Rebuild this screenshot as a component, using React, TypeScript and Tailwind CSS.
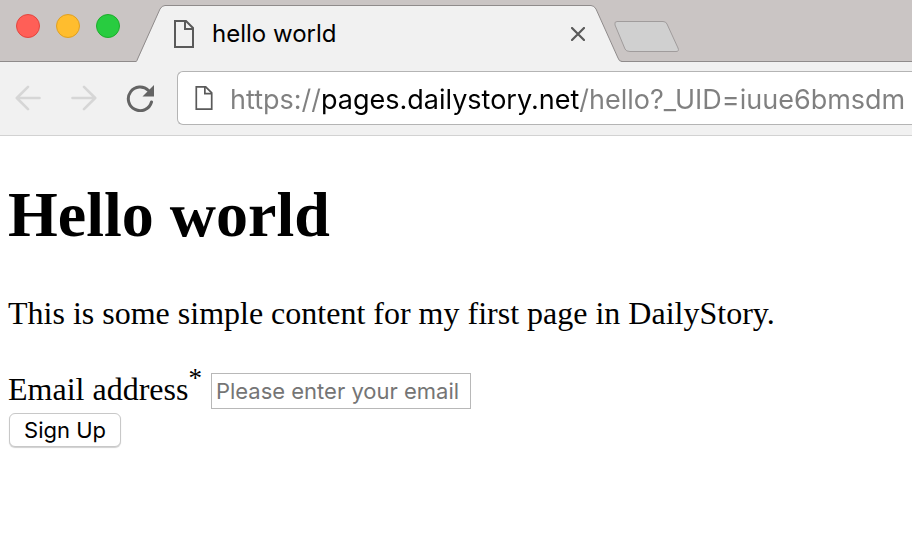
import { useState } from "react";

function PageIcon({ className }: { className: string }) {
  return (
    <svg viewBox="0 0 20 28" fill="none" stroke="#5a5a5a" strokeWidth="2" className={className} aria-hidden="true">
      <path d="M1 1H12L19 8V27H1Z" />
      <path d="M11 1V9H19" />
    </svg>
  );
}

function ArrowIcon({ className }: { className: string }) {
  return (
    <svg viewBox="0 0 26 26" fill="none" stroke="#d6d6d6" strokeWidth="2.600" strokeLinecap="round" strokeLinejoin="round" className={className} aria-hidden="true">
      <path d="M24.500 13H2M13 1.800L1.800 13L13 24.200" />
    </svg>
  );
}

function TabStrip() {
  return (
    <header className="flex h-[62px] items-start bg-[#cac5c4] shadow-[inset_0_-1px_0_#8f8b8b]">
      <div className="flex w-[136px] shrink-0 gap-4 pt-[14px] pl-4">
        <button aria-label="Close window" className="size-6 rounded-full border border-[#e2463f] bg-[#ff5f57]" />
        <button aria-label="Minimize window" className="size-6 rounded-full border border-[#dfa023] bg-[#ffbd2e]" />
        <button aria-label="Zoom window" className="size-6 rounded-full border border-[#1dad2b] bg-[#28cc40]" />
      </div>
      <div className="relative h-[62px] w-[486px] shrink-0">
        <svg viewBox="0 0 486 62" className="absolute inset-0 size-full" aria-hidden="true">
          <path d="M0 62L1 61L24 9Q26 5.500 29 5.500H455Q458 5.500 460 9L483 60L486 62Z" fill="#f1f1f1" />
          <path d="M0 61.500Q1 61 2 58L24 9Q26 5.500 29 5.500H455Q458 5.500 460 9L482 58Q483 61.500 486 61.500" fill="none" stroke="#8f8b8b" />
        </svg>
        <div className="relative flex h-full items-center pt-[6px] pr-9 pl-[38px]">
          <PageIcon className="h-7 w-5" />
          <span className="ml-[18px] flex-1 text-[24px] leading-8 text-black">hello world</span>
          <button aria-label="Close tab" className="p-[1px]">
            <svg viewBox="0 0 14 14" stroke="#5a5a5a" strokeWidth="2.200" strokeLinecap="round" className="size-[14px]" aria-hidden="true">
              <path d="M1 1L13 13M13 1L1 13" />
            </svg>
          </button>
        </div>
      </div>
      <button aria-label="New tab" className="-ml-2 pt-[21px]">
        <svg viewBox="0 0 66 32" className="h-8 w-[66px]" fill="#d0d0d0" stroke="#a09c9c" aria-hidden="true">
          <path d="M3 0.500H49Q52 0.500 53 3L64 27Q65.500 30.500 62 30.500H16Q12 30.500 11 28L1 4Q0 0.500 3 0.500Z" />
        </svg>
      </button>
    </header>
  );
}

function Toolbar() {
  const [url, setUrl] = useState("https://pages.dailystory.net/hello?_UID=iuue6bmsdm");
  return (
    <nav className="flex h-[74px] items-center overflow-hidden border-b border-[#d2d2d2] bg-[#f1f1f1] pb-[2px] pl-[15px]">
      <button aria-label="Back" disabled className="mr-[30px] shrink-0">
        <ArrowIcon className="size-[26px]" />
      </button>
      <button aria-label="Forward" disabled className="mr-[29px] shrink-0">
        <ArrowIcon className="size-[26px] rotate-180" />
      </button>
      <button aria-label="Reload" className="mr-[23px] shrink-0">
        <svg viewBox="0 0 28 28" className="size-7" fill="none" aria-hidden="true">
          <path d="M22.500 6.500A11.800 11.800 0 1 0 25.500 18" stroke="#646464" strokeWidth="3" strokeLinecap="round" />
          <path d="M28 1V12.500H16.500Z" fill="#646464" />
        </svg>
      </button>
      <div className="flex h-[54px] min-w-0 flex-1 items-center rounded-l-md border border-r-0 border-[#b4b4b4] bg-white pl-[17px]">
        <PageIcon className="h-6 w-[18px] shrink-0" />
        <input
          type="text"
          aria-label="Address"
          value={url}
          onChange={(e) => setUrl(e.target.value)}
          spellCheck={false}
          className="ml-[17px] h-12 min-w-0 flex-1 bg-[linear-gradient(to_right,#808080_91px,#000_91px,#000_349px,#808080_349px)] bg-clip-text pt-1 text-[27px] text-[#808080] caret-black outline-none [-webkit-text-fill-color:transparent]"
        />
      </div>
    </nav>
  );
}

export default function App() {
  return (
    <div className="min-h-screen bg-white font-[Inter,'Liberation_Sans',sans-serif] text-black">
      <TabStrip />
      <Toolbar />
      <main className="px-2 pt-[42px] font-['Liberation_Serif','Times_New_Roman',serif] text-[32px] leading-9">
        <h1 className="text-[64px] leading-[74px] font-bold">Hello world</h1>
        <p className="mt-[43px]">This is some simple content for my first page in DailyStory.</p>
        <form className="mt-[34px]" onSubmit={(e) => e.preventDefault()}>
          <div className="flex h-12 items-end pb-1">
            <label htmlFor="email" className="pb-[2px]">
              Email address<sup className="text-[27px] leading-none">*</sup>
            </label>
            <input
              id="email"
              type="email"
              placeholder="Please enter your email"
              className="ml-[9px] h-9 w-[260px] border border-[#b8b8b8] bg-white px-1 font-[Inter,'Liberation_Sans',sans-serif] text-[22px] leading-7 outline-none placeholder:text-[#757575]"
            />
          </div>
          <button
            type="submit"
            className="ml-px block h-[34px] w-28 rounded-md border border-[#c8c8c8] bg-white font-[Inter,'Liberation_Sans',sans-serif] text-[22px] leading-7 shadow-[0_1px_1px_#d0d0d0]"
          >
            Sign Up
          </button>
        </form>
      </main>
    </div>
  );
}
